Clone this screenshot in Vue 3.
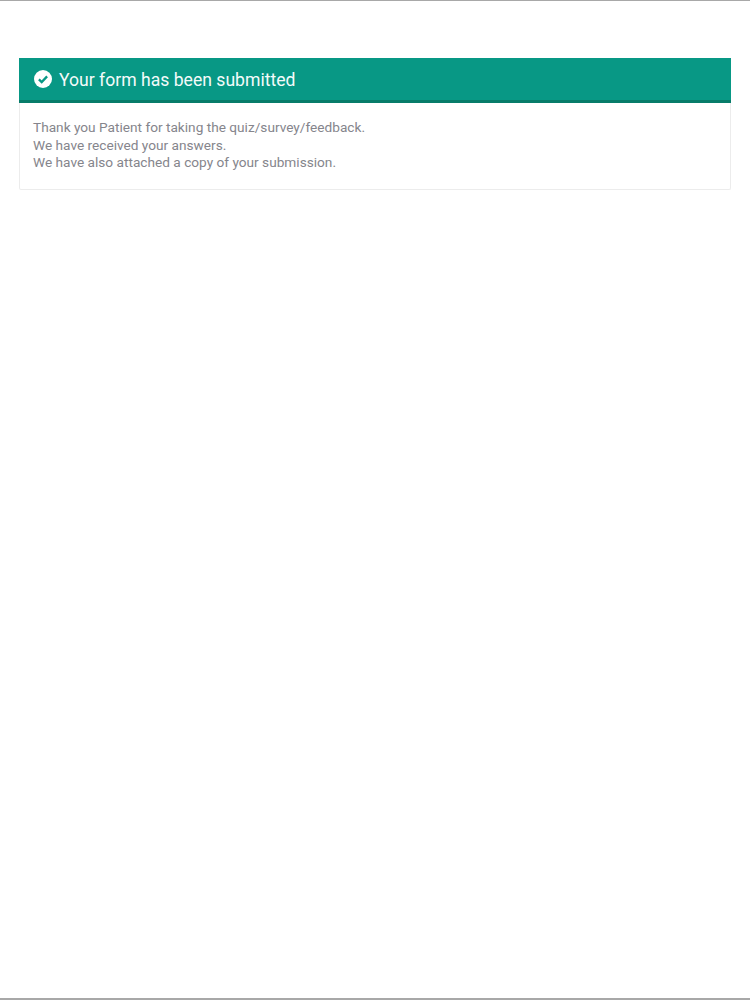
<script setup>
const lines = [
  'Thank you Patient for taking the quiz/survey/feedback.',
  'We have received your answers.',
  'We have also attached a copy of your submission.',
]
</script>

<template>
  <div class="page">
    <div class="top-line"></div>
    <main class="content">
      <section class="card">
        <header class="card-head">
          <svg class="check" viewBox="0 0 18 18" aria-hidden="true">
            <circle cx="9" cy="9" r="9" fill="#ffffff" />
            <path d="M4.9 9.4 L7.7 12.1 L13.1 6.4" fill="none" stroke="#089885" stroke-width="2.3" />
          </svg>
          <h1 class="title">Your form has been submitted</h1>
        </header>
        <div class="card-body">
          <p v-for="line in lines" :key="line" class="line">{{ line }}</p>
        </div>
      </section>
    </main>
    <div class="bottom-line"></div>
  </div>
</template>

<style scoped>
.page {
  width: 750px;
  height: 1000px;
  display: flex;
  flex-direction: column;
  background: #ffffff;
  font-family: Roboto, "Liberation Sans", sans-serif;
}
.top-line {
  height: 1px;
  background: #a8a8a8;
}
.content {
  flex: 1;
  padding: 57px 19px 0;
}
.card {
  border: 1px solid #ececec;
  border-top: none;
  border-radius: 2px;
  background: #ffffff;
}
.card-head {
  height: 42px;
  display: flex;
  align-items: center;
  gap: 7px;
  padding: 0 15px;
  background: #089885;
  border-bottom: 3px solid #077c6a;
  margin: 0 -1px;
}
.check {
  width: 18px;
  height: 18px;
  flex: none;
}
.title {
  margin: 0;
  padding-top: 2px;
  font-size: 17.6px;
  font-weight: 400;
  color: #f4fbfa;
}
.card-body {
  padding: 16px 13px 17px;
}
.line {
  margin: 0;
  font-size: 13.66px;
  line-height: 17.5px;
  color: #85858c;
}
.bottom-line {
  height: 2px;
  background: #a8a8a8;
}
</style>
